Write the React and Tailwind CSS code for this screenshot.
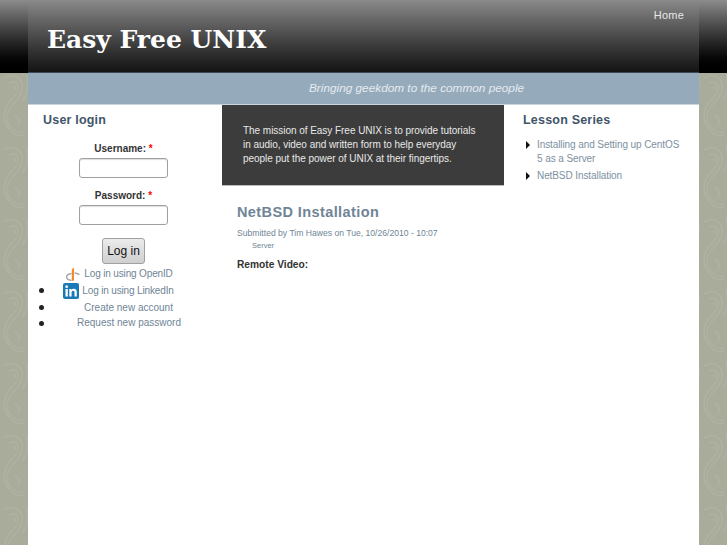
import React from "react";

const sans = { fontFamily: '"Liberation Sans", Arial, sans-serif' };

// paisley-ish wallpaper behind the page
const Wallpaper = () => (
  <svg className="absolute inset-0 w-full h-full" aria-hidden="true">
    <defs>
      <pattern id="paisley" width="28" height="72" patternUnits="userSpaceOnUse">
        <rect width="28" height="72" fill="#a9ac9b" />
        <g fill="none" stroke="#afb2a2" strokeWidth="1.500">
          <path d="M4 6c10-6 20 0 18 12S8 32 7 44s10 18 18 16" />
          <path d="M9 11c6-3 10 1 9 7s-14 13-14 25 10 23 20 20" />
          <path d="M13 15c2-1 3 1 2 3" />
          <path d="M14 44c5 0 7 6 4 10" />
          <path d="M26 2c3 9 2 18-3 27" />
        </g>
      </pattern>
    </defs>
    <rect width="100%" height="100%" fill="url(#paisley)" />
  </svg>
);

const OpenIdIcon = () => (
  <svg width="14" height="14" viewBox="0 0 14 14" className="shrink-0">
    <path d="M5.500 6.500C2.500 7 .5 8.300.5 10c0 1.700 2 3 5 3.500" fill="none" stroke="#a8a8a8" strokeWidth="1.500" />
    <path d="M8.500 6c2 .1 3.500.6 5 1.600" fill="none" stroke="#a8a8a8" strokeWidth="1.300" />
    <path d="M5.800 2.200 8 .8v12.400l-2.200 1Z" fill="#f18a2e" />
  </svg>
);

const LinkedInIcon = () => (
  <svg width="16" height="16" viewBox="0 0 16 16" className="shrink-0">
    <rect width="16" height="16" rx="2" fill="#1a7ab5" />
    <rect x="2.500" y="6" width="2.300" height="7.500" fill="#fff" />
    <circle cx="3.650" cy="3.700" r="1.350" fill="#fff" />
    <path d="M6.300 6h2.200v1.100C9 6.300 10 5.800 11 5.800c2 0 2.800 1.300 2.800 3.300v4.400h-2.300V9.500c0-1-.4-1.700-1.300-1.700s-1.600.7-1.600 1.800v3.900H6.300Z" fill="#fff" />
  </svg>
);

const Field = ({ label }) => (
  <div className="flex flex-col items-center pr-[3px]">
    <label className="mt-[1px] text-[10px] leading-[14px] font-bold text-[#333]">
      {label}: <span className="text-[#f00]">*</span>
    </label>
    <input
      type="text"
      className="mt-[2px] w-[89px] h-[20px] bg-white border border-[#a0a0a0] rounded-[3px] shadow-[inset_0_1px_1px_#ddd]"
    />
  </div>
);

const Bullet = () => (
  <span className="absolute left-[11px] top-[6px] w-[5px] h-[5px] rounded-full bg-[#222]" />
);

const LoginLinks = () => (
  <ul className="text-[10px] text-[#6f8596] mt-[1px]">
    <li className="relative h-[17px] flex items-center justify-center gap-[4px] pr-[11px] tracking-[-0.15px]">
      <OpenIdIcon />
      <a href="#">Log in using OpenID</a>
    </li>
    <li className="relative h-[17px] flex items-center justify-center gap-[3px] pr-[13px] tracking-[-0.15px]">
      <Bullet />
      <LinkedInIcon />
      <a href="#">Log in using LinkedIn</a>
    </li>
    <li className="relative h-[16px] flex items-center justify-center pl-[7px]">
      <Bullet />
      <a href="#">Create new account</a>
    </li>
    <li className="relative h-[15px] flex items-center justify-center pl-[8px]">
      <Bullet />
      <a href="#">Request new password</a>
    </li>
  </ul>
);

const App = () => {
  return (
    <div className="relative h-[545px] w-[727px] overflow-hidden" style={sans}>
      <Wallpaper />
      <div className="absolute inset-x-0 top-0 h-[73px] bg-gradient-to-b from-[#8c8c8c] to-[#000]" />
      <div className="relative ml-[28px] w-[671px] h-[545px] bg-white flex flex-col">
        <header className="h-[73px] shrink-0 flex justify-between bg-gradient-to-b from-[#8a8a8a] to-[#141414] border-b border-[#3d4a55]">
          <h1
            className="ml-[19px] mt-[24px] text-[25px] leading-[32px] font-bold text-white"
            style={{ fontFamily: '"DejaVu Serif", serif' }}
          >
            Easy Free UNIX
          </h1>
          <a href="#" className="mr-[15px] mt-[8px] text-[11px] leading-[14px] text-[#e8e8e8] tracking-[0.2px]">
            Home
          </a>
        </header>
        <div className="h-[31px] shrink-0 bg-[#95aabb] flex items-center pl-[281px] text-[11.800px] italic text-[#e6ebef]">
          Bringing geekdom to the common people
        </div>
        <div className="flex flex-1 border-t border-[#c9d4dc]">
          <aside className="w-[194px] shrink-0">
            <h2 className="ml-[15px] mt-[6px] text-[12.500px] leading-[18px] font-bold text-[#3f566a] tracking-[0.2px]">
              User login
            </h2>
            <form className="mt-[12px]">
              <Field label="Username" />
              <div className="mt-[10px]">
                <Field label="Password" />
              </div>
              <div className="flex justify-center mt-[13px] pr-[3px]">
                <button
                  type="button"
                  className="w-[43px] h-[26px] text-[12px] text-[#111] bg-gradient-to-b from-[#ececec] to-[#cfcfcf] border border-[#a0a0a0] rounded-[3px]"
                >
                  Log in
                </button>
              </div>
              <LoginLinks />
            </form>
          </aside>
          <main className="w-[282px] shrink-0">
            <div className="h-[81px] bg-[#3c3c3c] border-b border-[#bbb] pl-[21px] pt-[19px] text-[10px] leading-[14px] text-[#e8e8e8] tracking-[-0.04px]">
              <p className="w-[240px]">
                The mission of Easy Free UNIX is to provide tutorials in audio, video and written form to help everyday
                people put the power of UNIX at their fingertips.
              </p>
            </div>
            <article className="pl-[15px]">
              <h2 className="mt-[16px] text-[14.500px] leading-[20px] font-bold text-[#6f8596] tracking-[0.4px]">
                NetBSD Installation
              </h2>
              <p className="mt-[5px] text-[8.600px] leading-[12px] text-[#6f8596]">
                Submitted by Tim Hawes on Tue, 10/26/2010 - 10:07
              </p>
              <p className="mt-[1px] ml-[15px] text-[7.500px] leading-[11px] text-[#6f8596]">Server</p>
              <p className="mt-[7px] text-[10.200px] leading-[14px] font-bold text-[#333]">Remote Video:</p>
            </article>
          </main>
          <aside className="flex-1 pl-[19px]">
            <h2 className="mt-[6px] text-[12.500px] leading-[18px] font-bold text-[#3f566a] tracking-[0.2px]">
              Lesson Series
            </h2>
            <ul className="mt-[9px] text-[10px] leading-[14px] text-[#7d90a0] tracking-[-0.09px]">
              <li className="relative pl-[14px] pr-[16px]">
                <span className="absolute left-[3px] top-[3px] border-y-[4px] border-y-transparent border-l-[4px] border-l-[#111]" />
                <a href="#">Installing and Setting up CentOS 5 as a Server</a>
              </li>
              <li className="relative pl-[14px] mt-[3px]">
                <span className="absolute left-[3px] top-[3px] border-y-[4px] border-y-transparent border-l-[4px] border-l-[#111]" />
                <a href="#">NetBSD Installation</a>
              </li>
            </ul>
          </aside>
        </div>
      </div>
    </div>
  );
};

export default App;
